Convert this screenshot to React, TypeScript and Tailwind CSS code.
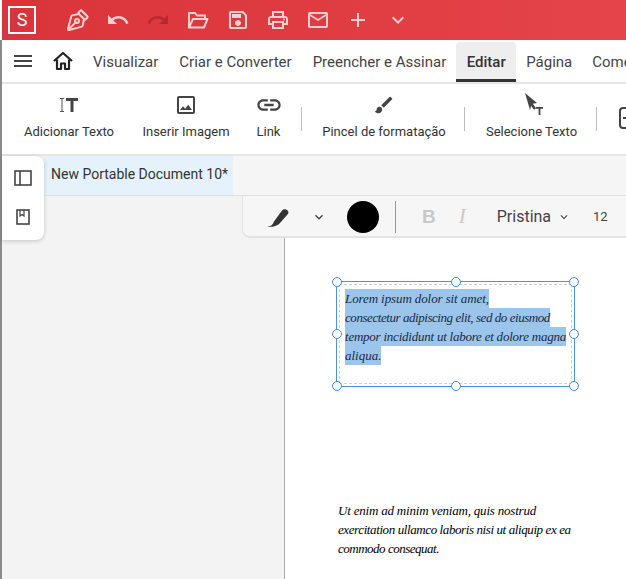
import type { ReactNode } from 'react';
import {
  MdAdd,
  MdBrush,
  MdKeyboardArrowDown,
  MdLink,
  MdMenu,
  MdOutlineImage,
  MdOutlineMailOutline,
  MdOutlinePrint,
  MdOutlineSave,
  MdRedo,
  MdUndo,
} from 'react-icons/md';
import { LuPenTool } from 'react-icons/lu';

function QuickIcon({ children }: { children: ReactNode }) {
  return <div className="w-10 flex items-center justify-center text-[#fbd0d1]">{children}</div>;
}

function TitleBar() {
  return (
    <div className="h-10 ml-0.5 bg-gradient-to-r from-[#d93439] to-[#e5444a] flex items-center">
      <div className="w-7 h-7 ml-1.5 border-2 border-white flex items-center justify-center text-white text-[18px] leading-none">
        S
      </div>
      <div className="flex items-center ml-[22px]">
        <QuickIcon><LuPenTool size={24} className="-rotate-90" /></QuickIcon>
        <QuickIcon><MdUndo size={24} /></QuickIcon>
        <div className="w-10 flex items-center justify-center text-[#b52a30]"><MdRedo size={24} /></div>
        <QuickIcon>
          <svg width="24" height="24" viewBox="0 0 24 24" fill="none" stroke="currentColor" strokeWidth="2" strokeLinejoin="round">
            <path d="M3 19.500V5h6l2 2.500h8V11" />
            <path d="M3 19.500h15l3.500-8.500H7z" />
          </svg>
        </QuickIcon>
        <QuickIcon><MdOutlineSave size={24} /></QuickIcon>
        <QuickIcon><MdOutlinePrint size={24} /></QuickIcon>
        <QuickIcon><MdOutlineMailOutline size={24} /></QuickIcon>
        <QuickIcon><MdAdd size={24} /></QuickIcon>
        <QuickIcon><MdKeyboardArrowDown size={24} /></QuickIcon>
      </div>
    </div>
  );
}

function NavBar() {
  return (
    <div className="h-[44px] flex items-center border-b-2 border-[#e6e6e6] text-[15px] text-[#444] whitespace-nowrap">
      <MdMenu size={24} className="ml-[9px] text-[#444] shrink-0" />
      <svg width="24" height="24" viewBox="0 0 24 24" fill="none" stroke="#222" strokeWidth="2.2" strokeLinejoin="round" className="ml-[16px] shrink-0">
        <path d="M3 12l9-8 9 8" />
        <path d="M6 10.500V20h4v-5.500h4V20h4v-9.500" />
      </svg>
      <span className="ml-[18px] pt-0.5">Visualizar</span>
      <span className="ml-[21px] pt-0.5">Criar e Converter</span>
      <span className="ml-[21px] pt-0.5">Preencher e Assinar</span>
      <div className="ml-[10px] w-[60px] h-10 self-start mt-0.5 pt-[3px] bg-[#eeeeee] rounded-t border-b-[3px] border-[#333] flex items-center justify-center font-medium text-[#333] shrink-0">
        Editar
      </div>
      <span className="ml-[10px] pt-0.5">Página</span>
      <span className="ml-[20px] pt-0.5">Comentar</span>
    </div>
  );
}

function RibbonItem({ icon, label, width }: { icon: ReactNode; label: string; width: string }) {
  return (
    <div className={`${width} shrink-0 flex flex-col items-center text-[#333]`}>
      <div className="h-6 flex items-center justify-center">{icon}</div>
      <span className="mt-[6px] text-[13px] leading-[18px] whitespace-nowrap">{label}</span>
    </div>
  );
}

function RibbonDivider() {
  return <div className="w-px h-6 mt-[14px] bg-[#bdbdbd] shrink-0" />;
}

function Ribbon() {
  return (
    <div className="h-[72px] flex items-start pt-[9px] border-b-2 border-[#e6e6e6] overflow-hidden">
      <RibbonItem
        width="w-[134px]"
        label="Adicionar Texto"
        icon={
          <svg width="24" height="24" viewBox="0 0 24 24" fill="none">
            <path d="M3 5.500h4M3 18.500h4M5 5.500v13" stroke="#555" strokeWidth="1" />
            <path d="M9 5h12v3h-4.500v11h-3V8H9z" fill="#444" />
          </svg>
        }
      />
      <RibbonItem
        width="w-[100px]"
        label="Inserir Imagem"
        icon={<MdOutlineImage size={24} className="text-[#444]" />}
      />
      <RibbonItem width="w-[65px]" label="Link" icon={<MdLink size={28} className="text-[#444]" />} />
      <RibbonDivider />
      <RibbonItem
        width="w-[162px] pl-[2px]"
        label="Pincel de formatação"
        icon={<MdBrush size={22} className="text-[#444]" />}
      />
      <RibbonDivider />
      <RibbonItem
        width="w-[131px] pl-[2px]"
        label="Selecione Texto"
        icon={
          <svg width="24" height="24" viewBox="0 0 24 24">
            <path d="M5 0l12 10-5.500 1-1.500 6z" fill="#444" />
            <path d="M10 9l5 7" stroke="#444" strokeWidth="2.600" />
            <path d="M16 14h7v1.800h-2.600V22h-1.800v-6.200H16z" fill="#444" />
          </svg>
        }
      />
      <RibbonDivider />
      <div className="ml-[22px] mt-[14px] w-[18px] h-[22px] border-2 border-[#444] rounded-sm shrink-0 flex items-center pl-0.5">
        <div className="w-1 h-0.5 bg-[#444]" />
      </div>
    </div>
  );
}

function SidePanel() {
  return (
    <div className="absolute left-0 top-0 w-[42px] h-[84px] bg-white rounded-r-lg shadow-[0_1px_4px_rgba(0,0,0,0.2)] flex flex-col items-center pt-[14px] gap-[23px]">
      <svg width="18" height="16" viewBox="0 0 18 16" fill="none">
        <rect x="1" y="1" width="16" height="14" stroke="#444" strokeWidth="1.600" />
        <path d="M6 1v14" stroke="#444" strokeWidth="1.600" />
      </svg>
      <svg width="14" height="16" viewBox="0 0 14 16" fill="none">
        <rect x="1" y="1" width="12" height="14" stroke="#444" strokeWidth="1.600" />
        <path d="M4 1v6l2-1.500L8 7V1" stroke="#444" strokeWidth="1.200" />
      </svg>
    </div>
  );
}

function FormatBar() {
  return (
    <div className="h-[42px] ml-[240px] pt-0.5 bg-[#f6f6f6] border-l border-b-2 border-[#e3e3e3] rounded-bl-lg flex items-center text-[#444] whitespace-nowrap overflow-hidden">
      <svg width="24" height="24" viewBox="0 0 24 24" className="ml-[23px] shrink-0">
        <path d="M1 22c4-.5 6-2.500 7-5.500L16 5.500c1.500-1.800 4.500-1.500 6 .5.800 1.200.5 2.500-.5 3.500L14 18c-3 3.500-8 4-13 4z" fill="#333" />
      </svg>
      <MdKeyboardArrowDown size={16} className="ml-[21px] shrink-0" />
      <div className="ml-[20px] w-8 h-8 rounded-full bg-black shrink-0" />
      <div className="ml-4 w-px h-8 bg-[#999] shrink-0" />
      <span className="ml-[26px] font-['Liberation_Sans',sans-serif] font-bold text-[19px] text-[#c9c9c9]">B</span>
      <span className="ml-[23px] font-['Liberation_Serif',serif] italic text-[21px] text-[#c9c9c9]">I</span>
      <span className="ml-[31px] text-[16px] text-[#444]">Pristina</span>
      <MdKeyboardArrowDown size={14} className="ml-[6px] shrink-0" />
      <span className="ml-[22px] text-[13px]">12</span>
    </div>
  );
}

function Handle({ className }: { className: string }) {
  return <div className={`absolute w-[10px] h-[10px] rounded-full bg-white border border-[#3f8fd6] ${className}`} />;
}

const scriptLine = "font-['Liberation_Serif',serif] italic text-[13px] leading-[19px] block w-max";

function Page() {
  return (
    <div className="flex-1 bg-white border-l border-[#aaaaaa] pt-[43px] pl-[51px] overflow-hidden">
      <div className="relative w-[239px] h-[106px] border border-[#4a94d8]">
        <Handle className="-left-[5px] -top-[5px]" />
        <Handle className="left-[114px] -top-[5px]" />
        <Handle className="-right-[5px] -top-[5px]" />
        <Handle className="-left-[5px] top-[47px]" />
        <Handle className="-right-[5px] top-[47px]" />
        <Handle className="-left-[5px] -bottom-[5px]" />
        <Handle className="left-[114px] -bottom-[5px]" />
        <Handle className="-right-[5px] -bottom-[5px]" />
        <div className="m-0.5 h-[100px] border border-dashed border-[#cfcfcf] pl-[5px] pt-[4px] text-[#1c2a44]">
          <span className={`${scriptLine} bg-[#9bc5ea] tracking-[-0.1px]`}>Lorem ipsum dolor sit amet,</span>
          <span className={`${scriptLine} bg-[#9bc5ea] tracking-[-0.44px]`}>consectetur adipiscing elit, sed do eiusmod</span>
          <span className={`${scriptLine} bg-[#9bc5ea] tracking-[-0.23px]`}>tempor incididunt ut labore et dolore magna</span>
          <span className={`${scriptLine} bg-[#9bc5ea]`}>aliqua.</span>
        </div>
      </div>
      <div className="mt-[114px] ml-[2px] text-black">
        <span className={`${scriptLine} tracking-[-0.2px]`}>Ut enim ad minim veniam, quis nostrud</span>
        <span className={`${scriptLine} tracking-[-0.4px]`}>exercitation ullamco laboris nisi ut aliquip ex ea</span>
        <span className={`${scriptLine} tracking-[-0.49px]`}>commodo consequat.</span>
      </div>
    </div>
  );
}

export default function App() {
  return (
    <div className="w-[626px] h-[579px] overflow-hidden bg-white font-['Roboto',sans-serif]">
      <TitleBar />
      <div className="border-l-2 border-[#8a8a8a]">
        <NavBar />
        <Ribbon />
        <div className="relative">
          <SidePanel />
          <div className="h-10 bg-[#f5f5f5] border-b border-[#e0e0e0] flex">
            <div className="ml-[42px] w-[189px] h-full bg-[#e6f2fb] pl-[7px] pt-[9px] text-[14px] leading-[18px] text-[#333]">
              New Portable Document 10*
            </div>
          </div>
          <div className="bg-[#f3f3f3]">
            <FormatBar />
            <div className="h-[341px] ml-[282px] flex">
              <Page />
            </div>
          </div>
        </div>
      </div>
    </div>
  );
}
